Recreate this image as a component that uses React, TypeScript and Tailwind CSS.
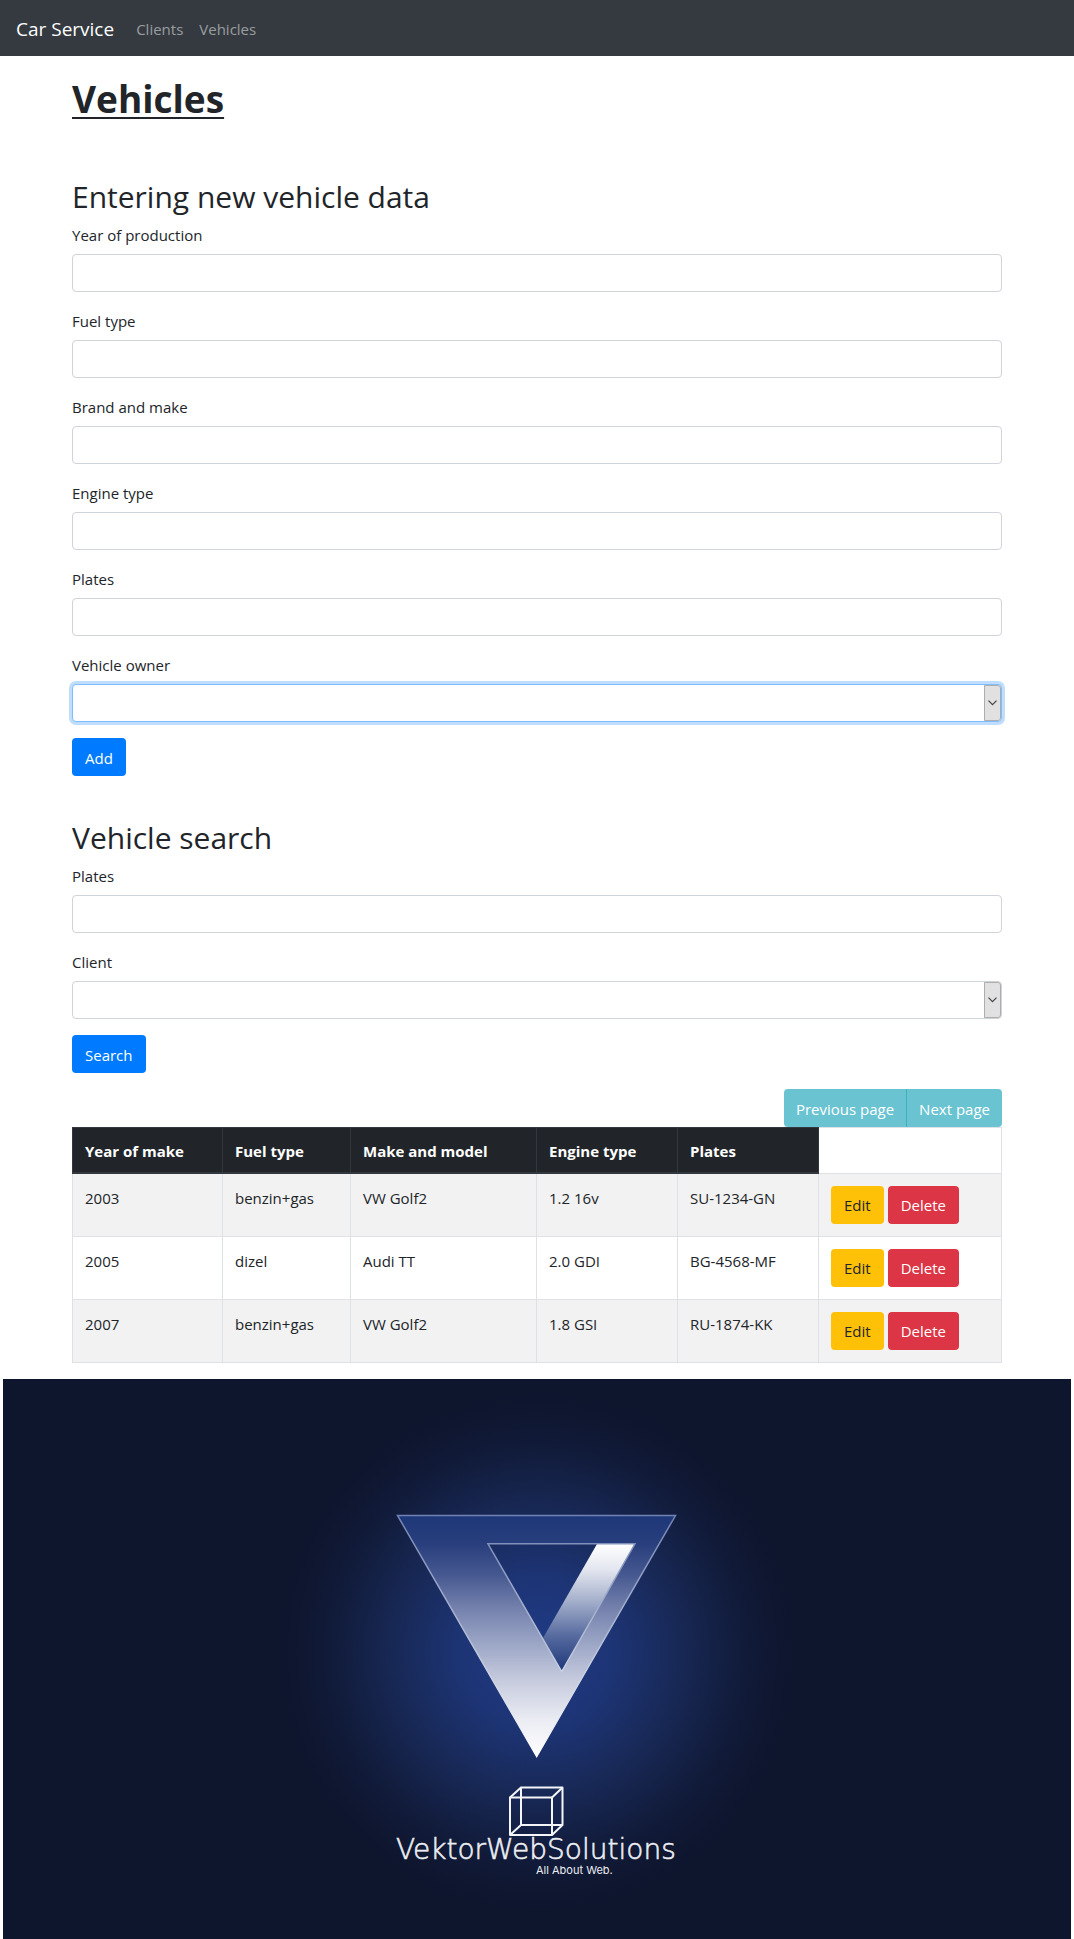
import React from "react";

const vehicles = [
  { year: "2003", fuel: "benzin+gas", model: "VW Golf2", engine: "1.2 16v", plates: "SU-1234-GN" },
  { year: "2005", fuel: "dizel", model: "Audi TT", engine: "2.0 GDI", plates: "BG-4568-MF" },
  { year: "2007", fuel: "benzin+gas", model: "VW Golf2", engine: "1.8 GSI", plates: "RU-1874-KK" },
];

const columns = [
  { title: "Year of make", width: "w-[150px]" },
  { title: "Fuel type", width: "w-[128px]" },
  { title: "Make and model", width: "w-[186px]" },
  { title: "Engine type", width: "w-[141px]" },
  { title: "Plates", width: "w-[141px]" },
];

const control =
  "block h-[38px] w-full rounded border bg-white px-3 text-[15px] text-[#495057] outline-none";

function TextField({ id, label }: { id: string; label: string }) {
  return (
    <div className="mb-4">
      <label htmlFor={id} className="mb-1.5 block leading-[26px]">
        {label}
      </label>
      <input id={id} type="text" className={`${control} border-[#ced4da]`} />
    </div>
  );
}

function SelectField({ id, label, active = false }: { id: string; label: string; active?: boolean }) {
  return (
    <div className="mb-4">
      <label htmlFor={id} className="mb-1.5 block leading-[26px]">
        {label}
      </label>
      <div className="relative">
        <select
          id={id}
          className={`${control} appearance-none ${
            active ? "border-[#80bdff] ring-3 ring-[#007bff]/25" : "border-[#ced4da]"
          }`}
        >
          <option value=""></option>
        </select>
        <span className="pointer-events-none absolute inset-y-px right-px flex w-[17px] items-center justify-center rounded-r-[3px] border border-[#adadad] bg-[#e1e1e1]">
          <svg width="9" height="6" viewBox="0 0 9 6" fill="none" stroke="#444" strokeWidth="1.2">
            <path d="M0.5 0.7 4.5 4.7 8.5 0.7" />
          </svg>
        </span>
      </div>
    </div>
  );
}

function Button({ tone, children }: { tone: string; children: React.ReactNode }) {
  return (
    <button type="button" className={`h-[38px] rounded px-[13px] pt-px ${tone}`}>
      {children}
    </button>
  );
}

function Banner() {
  return (
    <svg viewBox="0 0 1068 560" className="block w-full" role="img" aria-label="VektorWebSolutions">
      <defs>
        <radialGradient id="glow" gradientUnits="userSpaceOnUse" cx="534" cy="274" r="262">
          <stop offset="0" stopColor="#203c88" />
          <stop offset="0.3" stopColor="#1d3474" />
          <stop offset="0.55" stopColor="#182855" />
          <stop offset="0.78" stopColor="#111b3a" />
          <stop offset="0.9" stopColor="#0f1731" />
          <stop offset="1" stopColor="#0e162e" />
        </radialGradient>
        <linearGradient id="face" x1="0" y1="0" x2="0" y2="1">
          <stop offset="0" stopColor="#1d3778" />
          <stop offset="0.12" stopColor="#293f7d" />
          <stop offset="0.25" stopColor="#475991" />
          <stop offset="0.38" stopColor="#7380ac" />
          <stop offset="0.52" stopColor="#98a3c4" />
          <stop offset="0.68" stopColor="#c5cadd" />
          <stop offset="0.85" stopColor="#ebecf3" />
          <stop offset="1" stopColor="#ffffff" />
        </linearGradient>
        <linearGradient id="fold" x1="0" y1="0" x2="0" y2="1">
          <stop offset="0" stopColor="#ffffff" />
          <stop offset="0.2" stopColor="#e3e6ef" />
          <stop offset="0.45" stopColor="#a3aeca" />
          <stop offset="0.72" stopColor="#566a9f" />
          <stop offset="1" stopColor="#1c3678" />
        </linearGradient>
        <linearGradient id="edge" x1="0" y1="0" x2="0" y2="1">
          <stop offset="0" stopColor="#7283b3" />
          <stop offset="0.5" stopColor="#b4bdd6" />
          <stop offset="1" stopColor="#ffffff" />
        </linearGradient>
      </defs>
      <rect width="1068" height="560" fill="#0e162e" />
      <circle cx="534" cy="274" r="262" fill="url(#glow)" />
      <path d="M594 165H632L559 293 540 259Z" fill="url(#fold)" />
      <path
        d="M394.500 136.500H672.500L533.700 377.500ZM485 164.800 558.700 292.500 632 164.800Z"
        fill="url(#face)"
        fillRule="evenodd"
        stroke="url(#edge)"
        strokeWidth="1.500"
      />
      <g fill="none" stroke="#f4f5f8" strokeWidth="2" strokeLinejoin="round">
        <path d="M507 418.500H549V456H507Z" />
        <path d="M518 408.500H559.500V446H518Z" />
        <path d="M507 418.500 518 408.500M549 418.500 559.500 408.500M549 456 559.500 446M507 456 518 446" />
      </g>
      <text
        x="393"
        y="480"
        fill="#eceef3"
        stroke="#eceef3"
        strokeWidth="0.6"
        fontSize="28"
        fontWeight="200"
        fontFamily="'DejaVu Sans', sans-serif"
      >
        VektorWebSolutions
      </text>
      <text x="533" y="495" fill="#eceef3" fontSize="11" fontWeight="400" fontFamily="Inter, sans-serif">
        All About Web.
      </text>
    </svg>
  );
}

export default function App() {
  return (
    <div className="bg-white font-['Open_Sans',sans-serif] text-[15px] leading-6 font-normal text-[#212529]">
      <nav className="flex h-14 items-center bg-[#343a40] px-4 pt-0.5">
        <a href="#" className="mr-3.5 text-[19px] text-white">
          Car Service
        </a>
        <a href="#clients" className="px-2 text-white/50">
          Clients
        </a>
        <a href="#vehicles" className="px-2 text-white/50">
          Vehicles
        </a>
      </nav>

      <main className="mx-auto max-w-[960px] px-[15px]">
        <h1 className="pt-[19px] text-[37px] leading-12 font-bold underline decoration-2 underline-offset-4">Vehicles</h1>

        <form className="mt-[53px]" onSubmit={(e) => e.preventDefault()}>
          <h2 className="mb-1 text-[30px] leading-[42px]">Entering new vehicle data</h2>
          <TextField id="year" label="Year of production" />
          <TextField id="fuel" label="Fuel type" />
          <TextField id="brand" label="Brand and make" />
          <TextField id="engine" label="Engine type" />
          <TextField id="plates" label="Plates" />
          <SelectField id="owner" label="Vehicle owner" active />
          <Button tone="bg-[#007bff] text-white">Add</Button>
        </form>

        <form className="mt-[41px]" onSubmit={(e) => e.preventDefault()}>
          <h2 className="mb-1 text-[30px] leading-[42px]">Vehicle search</h2>
          <TextField id="search-plates" label="Plates" />
          <SelectField id="search-client" label="Client" />
          <Button tone="bg-[#007bff] text-white">Search</Button>
        </form>

        <div className="mt-4 flex justify-end">
          <button type="button" className="h-[38px] rounded-l border-r border-[#3eb0c4] bg-[#69c3d1] px-3 pt-px text-white">
            Previous page
          </button>
          <button type="button" className="h-[38px] rounded-r bg-[#69c3d1] px-3 pt-px text-white">
            Next page
          </button>
        </div>

        <table className="mb-4 w-full table-fixed border-collapse border border-[#dee2e6]">
          <thead>
            <tr>
              {columns.map((c) => (
                <th
                  key={c.title}
                  className={`${c.width} border border-b-2 border-[#32383e] bg-[#212529] px-3 pt-3 pb-2.5 text-left text-[15px] leading-[22px] font-bold text-white`}
                >
                  {c.title}
                </th>
              ))}
              <td className="border border-[#dee2e6]"></td>
            </tr>
          </thead>
          <tbody>
            {vehicles.map((v) => (
              <tr key={v.year} className="align-top odd:bg-[#f2f2f2]">
                <td className="border border-[#dee2e6] p-3">{v.year}</td>
                <td className="border border-[#dee2e6] p-3">{v.fuel}</td>
                <td className="border border-[#dee2e6] p-3">{v.model}</td>
                <td className="border border-[#dee2e6] p-3">{v.engine}</td>
                <td className="border border-[#dee2e6] p-3">{v.plates}</td>
                <td className="border border-[#dee2e6] p-3">
                  <div className="flex gap-1">
                    <Button tone="bg-[#ffc107]">Edit</Button>
                    <Button tone="bg-[#dc3545] text-white">Delete</Button>
                  </div>
                </td>
              </tr>
            ))}
          </tbody>
        </table>
      </main>

      <footer className="px-[3px]">
        <Banner />
      </footer>
    </div>
  );
}
